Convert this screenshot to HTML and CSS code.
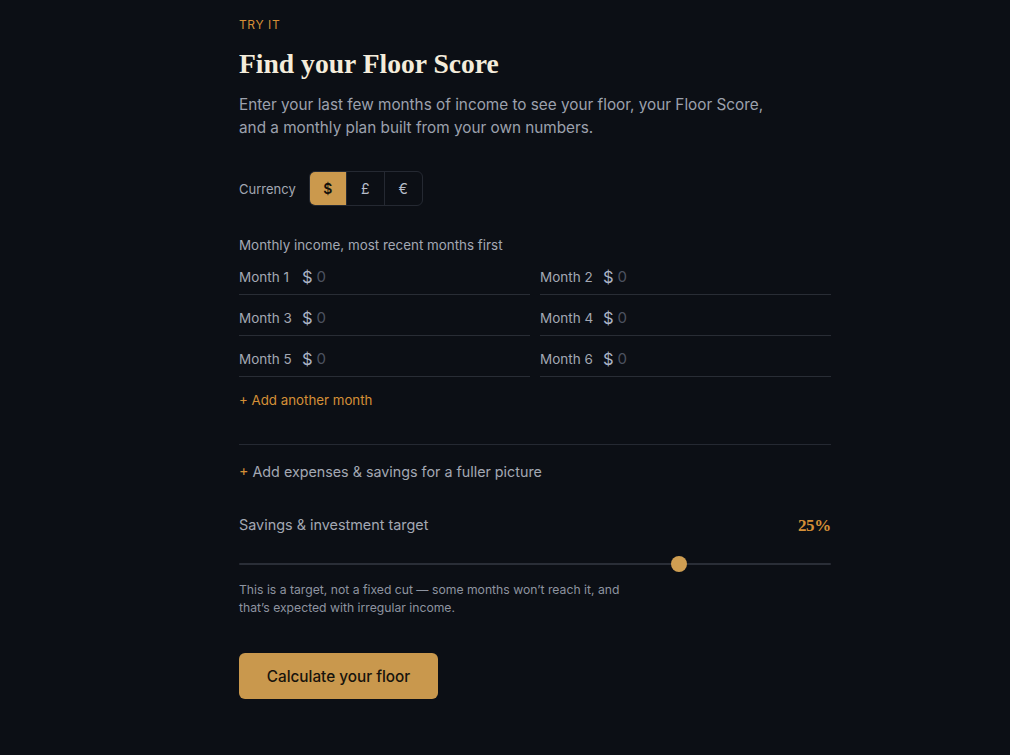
FILE: index.html
```html
<!DOCTYPE html>
<html lang="en">
<head>
<meta charset="utf-8">
<title>Find your Floor Score</title>
<link rel="stylesheet" href="styles.css">
</head>
<body>
<main class="page">
  <section class="tool">
    <div class="eyebrow">TRY IT</div>
    <h1 class="title">Find your Floor Score</h1>
    <p class="lede">Enter your last few months of income to see your floor, your Floor Score,<br>and a monthly plan built from your own numbers.</p>

    <div class="currency">
      <span class="currency-label">Currency</span>
      <div class="seg">
        <button class="seg-btn active">$</button>
        <button class="seg-btn">£</button>
        <button class="seg-btn">€</button>
      </div>
    </div>

    <div class="income">
      <div class="income-label">Monthly income, most recent months first</div>
      <div class="months">
        <label class="month"><span class="m-name">Month 1</span><span class="m-cur">$</span><span class="m-val">0</span></label>
        <label class="month"><span class="m-name">Month 2</span><span class="m-cur">$</span><span class="m-val">0</span></label>
        <label class="month"><span class="m-name">Month 3</span><span class="m-cur">$</span><span class="m-val">0</span></label>
        <label class="month"><span class="m-name">Month 4</span><span class="m-cur">$</span><span class="m-val">0</span></label>
        <label class="month"><span class="m-name">Month 5</span><span class="m-cur">$</span><span class="m-val">0</span></label>
        <label class="month"><span class="m-name">Month 6</span><span class="m-cur">$</span><span class="m-val">0</span></label>
      </div>
      <div class="add-month">+ Add another month</div>
    </div>

    <div class="expenses"><span class="plus">+</span> Add expenses &amp; savings for a fuller picture</div>

    <div class="target">
      <div class="target-head">
        <span class="target-label">Savings &amp; investment target</span>
        <span class="target-val">25%</span>
      </div>
      <div class="slider">
        <div class="track"></div>
        <div class="thumb" style="left: 74.3%"></div>
      </div>
      <p class="note">This is a target, not a fixed cut — some months won’t reach it, and<br>that’s expected with irregular income.</p>
    </div>

    <button class="cta">Calculate your floor</button>
  </section>
</main>
</body>
</html>
```

FILE: styles.css
```css
* { box-sizing: border-box; }
html, body { margin: 0; padding: 0; }
body {
  background: #0c0f15;
  color: #9ca1ad;
  font-family: Inter, "Noto Sans", "DejaVu Sans", sans-serif;
  height: 755px;
  overflow: hidden;
}
.page {
  padding: 17px 0 0 239px;
}
.tool {
  width: 592px;
  display: flex;
  flex-direction: column;
}
.eyebrow {
  color: #d58f37;
  font-size: 12px;
  letter-spacing: 0.6px;
  line-height: 15px;
}
.title {
  margin: 16px 0 0;
  font-family: "Liberation Serif", "DejaVu Serif", serif;
  font-weight: 700;
  font-size: 27.6px;
  line-height: 32px;
  color: #f4ecdb;
  letter-spacing: 0;
}
.lede {
  margin: 13px 0 0;
  font-size: 15.3px;
  line-height: 23px;
  color: #9ca1ad;
}
.currency {
  margin-top: 32px;
  display: flex;
  align-items: center;
  gap: 13px;
}
.currency-label {
  font-size: 13px;
  color: #a3a8b3;
}
.seg {
  display: flex;
  border: 1px solid #252932;
  border-radius: 6px;
  overflow: hidden;
  height: 35px;
}
.seg-btn {
  width: 38px;
  height: 100%;
  background: transparent;
  border: 0;
  border-left: 1px solid #252932;
  color: #b7bdc9;
  font-family: Inter, "DejaVu Sans", sans-serif;
  font-size: 14px;
  padding: 0;
}
.seg-btn:first-child { border-left: 0; width: 36px; }
.seg-btn.active {
  background: #cb994d;
  color: #15120c;
  font-weight: 600;
}
.income { margin-top: 31px; }
.income-label {
  font-size: 13.4px;
  line-height: 16px;
  color: #a3a8b3;
}
.months {
  margin-top: 1px;
  display: grid;
  grid-template-columns: 1fr 1fr;
  column-gap: 10px;
}
.month {
  height: 41px;
  display: flex;
  align-items: flex-end;
  border-bottom: 1px solid #292d35;
  padding-bottom: 8px;
}
.m-name {
  font-size: 13.5px;
  line-height: 18px;
  color: #a3a8b3;
  width: 63px;
}
.m-cur {
  font-size: 16.5px;
  line-height: 18px;
  color: #aab3c6;
  margin-right: 4px;
}
.m-val {
  font-size: 15px;
  line-height: 18px;
  color: #4c5260;
}
.add-month {
  margin-top: 15px;
  font-size: 13.3px;
  color: #d58f37;
}
.expenses {
  margin-top: 36px;
  border-top: 1px solid #252932;
  padding-top: 18px;
  font-size: 14.3px;
  color: #a3a8b3;
}
.plus { color: #d58f37; }
.target { margin-top: 32px; }
.target-head {
  display: flex;
  justify-content: space-between;
  align-items: center;
}
.target-label {
  font-size: 14.4px;
  color: #a3a8b3;
}
.target-val {
  font-family: "Liberation Serif", "DejaVu Serif", serif;
  font-weight: 700;
  font-size: 17px;
  color: #d58f37;
  letter-spacing: -0.3px;
  margin-top: 4px;
}
.slider {
  position: relative;
  height: 16px;
  margin-top: 20px;
}
.track {
  position: absolute;
  left: 0;
  right: 0;
  top: 7px;
  height: 2px;
  background: #2a2e37;
  border-radius: 1px;
}
.thumb {
  position: absolute;
  top: 0;
  width: 16px;
  height: 16px;
  margin-left: -8px;
  border-radius: 50%;
  background: #cf9e52;
}
.note {
  margin: 9px 0 0;
  font-size: 12.2px;
  line-height: 18px;
  color: #8e94a0;
}
.cta {
  margin-top: 36px;
  align-self: flex-start;
  width: 199px;
  height: 46px;
  border: 0;
  border-radius: 6px;
  background: #c9984d;
  color: #17130c;
  font-family: Inter, "DejaVu Sans", sans-serif;
  font-size: 15.3px;
  font-weight: 500;
}
```
